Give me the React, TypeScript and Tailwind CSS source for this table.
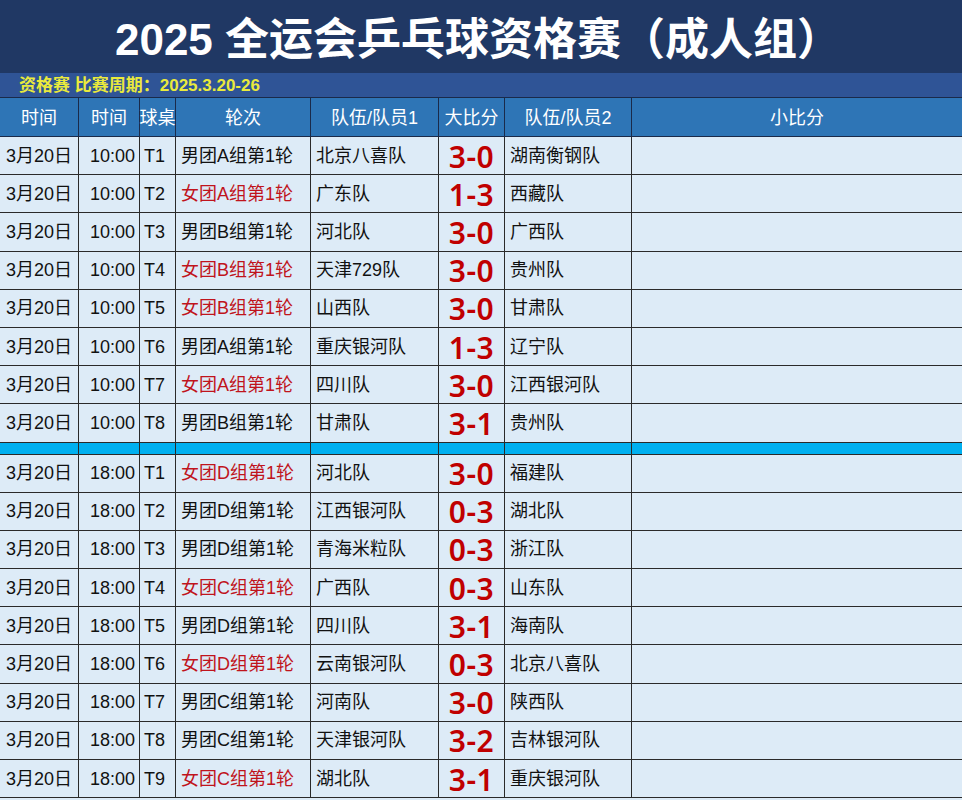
import React from 'react';

type Match = {
  time: string;
  table: string;
  round: string;
  team1: string;
  score: string;
  team2: string;
};

const morning: Match[] = [
  { time: '10:00', table: 'T1', round: '男团A组第1轮', team1: '北京八喜队', score: '3-0', team2: '湖南衡钢队' },
  { time: '10:00', table: 'T2', round: '女团A组第1轮', team1: '广东队', score: '1-3', team2: '西藏队' },
  { time: '10:00', table: 'T3', round: '男团B组第1轮', team1: '河北队', score: '3-0', team2: '广西队' },
  { time: '10:00', table: 'T4', round: '女团B组第1轮', team1: '天津729队', score: '3-0', team2: '贵州队' },
  { time: '10:00', table: 'T5', round: '女团B组第1轮', team1: '山西队', score: '3-0', team2: '甘肃队' },
  { time: '10:00', table: 'T6', round: '男团A组第1轮', team1: '重庆银河队', score: '1-3', team2: '辽宁队' },
  { time: '10:00', table: 'T7', round: '女团A组第1轮', team1: '四川队', score: '3-0', team2: '江西银河队' },
  { time: '10:00', table: 'T8', round: '男团B组第1轮', team1: '甘肃队', score: '3-1', team2: '贵州队' },
];

const evening: Match[] = [
  { time: '18:00', table: 'T1', round: '女团D组第1轮', team1: '河北队', score: '3-0', team2: '福建队' },
  { time: '18:00', table: 'T2', round: '男团D组第1轮', team1: '江西银河队', score: '0-3', team2: '湖北队' },
  { time: '18:00', table: 'T3', round: '男团D组第1轮', team1: '青海米粒队', score: '0-3', team2: '浙江队' },
  { time: '18:00', table: 'T4', round: '女团C组第1轮', team1: '广西队', score: '0-3', team2: '山东队' },
  { time: '18:00', table: 'T5', round: '男团D组第1轮', team1: '四川队', score: '3-1', team2: '海南队' },
  { time: '18:00', table: 'T6', round: '女团D组第1轮', team1: '云南银河队', score: '0-3', team2: '北京八喜队' },
  { time: '18:00', table: 'T7', round: '男团C组第1轮', team1: '河南队', score: '3-0', team2: '陕西队' },
  { time: '18:00', table: 'T8', round: '男团C组第1轮', team1: '天津银河队', score: '3-2', team2: '吉林银河队' },
  { time: '18:00', table: 'T9', round: '女团C组第1轮', team1: '湖北队', score: '3-1', team2: '重庆银河队' },
];

const cols = 'grid grid-cols-[79px_61px_36px_135px_128px_66px_127px_1fr]';
const cell = 'flex items-center border-r border-b border-[#2a2a2a] whitespace-nowrap';

const MatchRow = ({ m }: { m: Match }) => {
  const women = m.round.startsWith('女');
  return (
    <div className={`${cols} h-[38.2px] bg-[#ddebf7] text-[18px] text-[#111]`}>
      <div className={`${cell} justify-center pt-[1px]`}>3月20日</div>
      <div className={`${cell} justify-end pr-[4px] pt-[1px]`}>{m.time}</div>
      <div className={`${cell} pl-[4px] pt-[1px]`}>{m.table}</div>
      <div className={`${cell} pl-[5px] pt-[1px] ${women ? 'text-[#c0141c]' : ''}`}>{m.round}</div>
      <div className={`${cell} pl-[5px] pt-[1px]`}>{m.team1}</div>
      <div className={`${cell} justify-center pt-[2px] text-[30px] leading-none font-semibold font-['Noto_Sans',sans-serif] text-[#c00000] tracking-[0.5px]`}>
        {m.score}
      </div>
      <div className={`${cell} pl-[5px] pt-[1px]`}>{m.team2}</div>
      <div className={`${cell} border-r-0`}></div>
    </div>
  );
};

const headers = ['时间', '时间', '球桌', '轮次', '队伍/队员1', '大比分', '队伍/队员2', '小比分'];

export default function App() {
  return (
    <div className="w-[962px] h-[800px] overflow-hidden bg-[#ddebf7] font-['Liberation_Sans','Noto_Sans_CJK_SC',sans-serif]">
      <div className="h-[73px] bg-[#203864] flex items-center justify-center">
        <h1 className="text-[44px] font-bold text-white pt-[6px] pr-[6px]">2025 全运会乒乓球资格赛（成人组）</h1>
      </div>
      <div className="h-[25px] bg-[#2f5496] flex items-center pl-[19px] border-b border-[#1a2a4a]">
        <span className="text-[17px] font-bold text-[#eaea3c] pt-[1px]">资格赛 比赛周期：2025.3.20-26</span>
      </div>
      <div className={`${cols} h-[39px] bg-[#2e75b6] text-white text-[18px]`}>
        {headers.map((h, i) => (
          <div
            key={i}
            className={`flex items-center justify-center pt-[2px] border-b border-[#1a2a4a] whitespace-nowrap ${i < 7 ? 'border-r' : ''} border-r-[#1a2a4a]`}
          >
            {h}
          </div>
        ))}
      </div>
      {morning.map((m, i) => (
        <MatchRow key={`a${i}`} m={m} />
      ))}
      <div className={`${cols} h-[12px] bg-[#00b0f0]`}>
        {headers.map((_, i) => (
          <div key={i} className={`border-b border-[#2a2a2a] ${i < 7 ? 'border-r' : ''} border-r-[#2a2a2a]`}></div>
        ))}
      </div>
      {evening.map((m, i) => (
        <MatchRow key={`b${i}`} m={m} />
      ))}
    </div>
  );
}
